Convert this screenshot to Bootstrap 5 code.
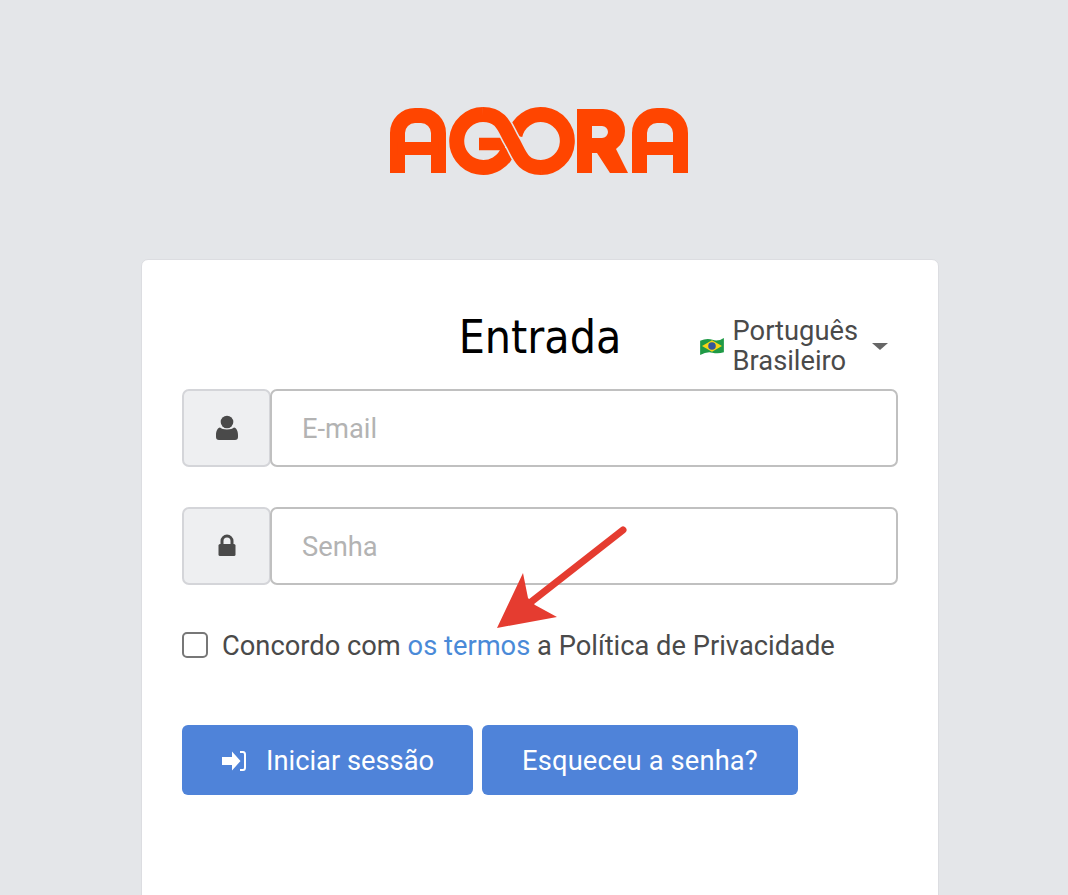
<!DOCTYPE html>
<html lang="pt-BR">
<head>
<meta charset="utf-8">
<title>Entrada</title>
<link href="https://cdn.jsdelivr.net/npm/bootstrap@5.3.0/dist/css/bootstrap.min.css" rel="stylesheet">
<style>
html,body{height:100%;overflow:hidden}
body{background:#e4e6e9;font-family:Roboto,sans-serif;color:#4a4a4a;position:relative}
.logo-wrap{padding-top:106px;height:259px;display:flex;justify-content:center}
.logo-svg{display:block;margin-left:9px}
.login-panel{width:798px;margin:0 0 0 141px;height:700px;border:1px solid #dcdde1;border-radius:7px;padding:41px 40px 40px;background:#fff}
.head-side{flex:1 1 0;min-width:0}
.panel-title{font-family:"DejaVu Sans",sans-serif;font-stretch:condensed;font-size:46px;font-weight:400;color:#000;margin:0;line-height:73px;white-space:nowrap}
.head-row{height:88px}
.lang-pick{padding-right:10px;font-size:27.3px;line-height:30px;padding-top:15px;gap:8px}
.lang-caret{width:0;height:0;border-left:8px solid transparent;border-right:8px solid transparent;border-top:7px solid #666;margin:0 0 0 6px}
.login-group{height:78px;margin-bottom:40px;flex-wrap:nowrap}
.login-group .input-group-text{width:89px;justify-content:center;background:#eeeff1;border:2px solid #d4d5d9;border-radius:7px!important;padding:0;flex:none}
.login-group .form-control{height:78px;border:2px solid #c0c0c0;border-radius:7px!important;padding:2px 30px 0;font-size:27.3px;color:#4a4a4a;margin-left:-1px!important}
.login-group .form-control::placeholder{color:#b3b3b3}
.lock-glyph{margin-bottom:2px}
.terms-row{margin:2px 0 0;padding:0;height:40px;font-size:27.3px;line-height:40px}
.terms-row .form-check-input{width:26px;height:26px;float:none;margin:0;border:2px solid #777;border-radius:5px;flex:none}
.terms-row label{margin-left:14px;padding-top:2px;white-space:nowrap}
.terms-link{color:#4a8ad8;text-decoration:none}
.action-row{margin-top:60px;gap:9px}
.action-btn{height:70px;background:#4f83d9;border:0;border-radius:6px;color:#fff;font-size:27.3px;padding:2px 40px 0;display:flex;align-items:center}
.action-btn-first{padding-right:39px}
.action-btn-wide{letter-spacing:.15px}
.btn-icon{margin-right:20px}
.note-arrow{position:absolute;left:490px;top:520px;pointer-events:none}
</style>
</head>
<body>
<div class="logo-wrap">
<svg class="logo-svg" width="300" height="70" viewBox="389 106 300 70" aria-label="Agora logo" role="img">
<g fill="none" stroke="#ff4500" stroke-width="15">
<path d="M397.5 173V133A17.500 17.500 0 0 1 415 115.500H421A17.500 17.500 0 0 1 438.500 133V173"/>
<path d="M397.500 148.500H438.500" stroke-width="13"/>
<path d="M639.500 173V133A17.500 17.500 0 0 1 657 115.500H663A17.500 17.500 0 0 1 680.500 133V173"/>
<path d="M639.500 148.500H680.500" stroke-width="13"/>
<path d="M508.500 149A26.500 26.500 0 1 1 483 114.500"/>
<path d="M479 144H505" stroke-width="12.500"/>
<path d="M541 167.500A26.500 26.500 0 1 0 514.900 135.500"/>
<path d="M483 114.500C503 114.500 505 130 512 141C519 152 521 167.500 541 167.500" stroke="#e4e6e9" stroke-width="18"/>
<path d="M483 114.500C503 114.500 505 130 512 141C519 152 521 167.500 541 167.500"/>
</g>
<path fill="#ff4500" fill-rule="evenodd" d="M577 109H603A22 22 0 0 1 625 131A22 22 0 0 1 616 149L628 173H610L597 153H592V173H577ZM592 126V138H602A6 6 0 0 0 602 126Z"/>
</svg>
</div>
<main class="login-panel">
<div class="d-flex head-row">
<div class="head-side"></div>
<h1 class="panel-title">Entrada</h1>
<div class="head-side d-flex justify-content-end">
<div class="lang-pick d-flex align-items-center align-self-start">
<svg width="26" height="19" viewBox="0 0 27 20" aria-hidden="true"><path fill="#1f9a46" d="M1 4Q8 1 14 3T26 1V16Q20 18 14 16.500T1 19Z"/><path fill="#f7d417" d="M13.500 3.500L24 9.500L13.500 15.500L3 9.500Z"/><circle cx="13.500" cy="9.500" r="4" fill="#34569c"/></svg>
<span>Português<br>Brasileiro</span>
<span class="lang-caret"></span>
</div>
</div>
</div>
<form>
<div class="input-group login-group">
<span class="input-group-text"><svg width="24" height="26" viewBox="0 0 24 26" aria-hidden="true"><circle cx="12" cy="7" r="6.300" fill="#4a4a4a"/><path fill="#4a4a4a" d="M5 12.500C7 15 17 15 19 12.500C21.500 13 23 16 23 20V22Q23 25 20 25H4Q1 25 1 22V20C1 16 2.500 13 5 12.500Z"/></svg></span>
<input class="form-control" type="text" placeholder="E-mail">
</div>
<div class="input-group login-group">
<span class="input-group-text"><svg class="lock-glyph" width="18" height="22" viewBox="0 0 18 22" aria-hidden="true"><path fill="none" stroke="#4a4a4a" stroke-width="3" d="M4 11V7A5 5 0 0 1 14 7V11"/><rect x="0.500" y="10" width="17" height="12" rx="1.500" fill="#4a4a4a"/></svg></span>
<input class="form-control" type="password" placeholder="Senha">
</div>
<div class="form-check d-flex align-items-center terms-row">
<input class="form-check-input" type="checkbox" id="termsCheck">
<label for="termsCheck">Concordo com <a href="#" class="terms-link">os termos</a> a Política de Privacidade</label>
</div>
<div class="d-flex action-row">
<button type="button" class="btn action-btn action-btn-first"><svg class="btn-icon" width="24" height="20" viewBox="0 0 24 20" aria-hidden="true"><path fill="#fff" d="M0 6H10V0.500L18.500 10L10 19.500V14H0Z"/><path fill="none" stroke="#fff" stroke-width="2" d="M18 1H21Q23 1 23 3.500V16.500Q23 19 21 19H18"/></svg>Iniciar sessão</button>
<button type="button" class="btn action-btn action-btn-wide">Esqueceu a senha?</button>
</div>
</form>
</main>
<svg class="note-arrow" width="140" height="115" viewBox="490 520 140 115" aria-hidden="true"><path d="M623 530L531 602" stroke="#e53c30" stroke-width="7" stroke-linecap="round" fill="none"/><path fill="#e53c30" d="M523 573L528 598L535 605L557 617L497 628Z"/></svg>
</body>
</html>
